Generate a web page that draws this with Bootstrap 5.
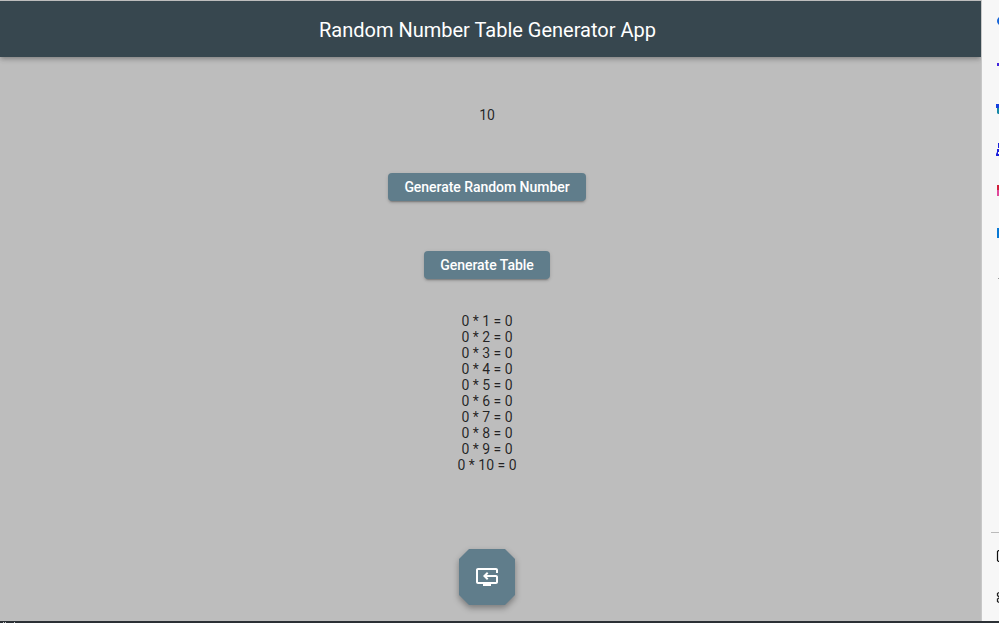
<!DOCTYPE html>
<html lang="en">
<head>
<meta charset="utf-8">
<meta name="viewport" content="width=device-width, initial-scale=1">
<title>Random Number Table Generator App</title>
<link href="https://cdn.jsdelivr.net/npm/bootstrap@5.3.0/dist/css/bootstrap.min.css" rel="stylesheet">
<style>
body { font-family: Roboto, sans-serif; font-size: 14px; line-height: 16px; color: rgba(0,0,0,.82); background: #bdbdbd; }
.app-bar { height: 56px; margin-top: 1px; padding: 2px 6px 0 0; background: #37474f; color: #fff; box-shadow: 0 2px 4px -1px rgba(0,0,0,.2), 0 3px 5px rgba(0,0,0,.12), 0 1px 8px rgba(0,0,0,.06); clip-path: inset(0 0 -16px 0); }
.app-bar h1 { font-size: 20px; font-weight: 400; line-height: 24px; }
.app-content { padding: 50px 7px 0 0; }
.app-btn { --bs-btn-color: #fff; --bs-btn-bg: #607d8b; --bs-btn-hover-color: #fff; --bs-btn-hover-bg: #6d8996; --bs-btn-border-width: 0; --bs-btn-border-radius: 4px; --bs-btn-font-size: 14px; --bs-btn-font-weight: 500; --bs-btn-line-height: 16px; --bs-btn-padding-x: 0; --bs-btn-padding-y: 6px; height: 28px; letter-spacing: -.04px; box-shadow: 0 3px 1px -2px rgba(0,0,0,.18), 0 2px 2px rgba(0,0,0,.11), 0 1px 4px rgba(0,0,0,.1); }
.btn-random { width: 198px; margin-top: 50px; }
.btn-table { width: 126px; margin-top: 50px; }
.times-table { margin-top: 34px; }
.fab { width: 56px; height: 56px; margin-top: 76px; filter: drop-shadow(0 3px 3px rgba(0,0,0,.35)); }
.fab-face { background: #607d8b; clip-path: polygon(10px 0, 46px 0, 56px 10px, 56px 46px, 46px 56px, 10px 56px, 0 46px, 0 10px); }
.side-rail { width: 17px; background: #f7f7f7; }
.app-edge { width: 1px; background: #c8c8c8; }
.rail-art { display: block; }
.taskbar { height: 2px; background: #2b3035; }
</style>
<script src="https://cdn.jsdelivr.net/npm/bootstrap@5.3.0/dist/js/bootstrap.bundle.min.js" defer></script>
</head>
<body>
<div class="d-flex flex-column vh-100 overflow-hidden">
  <div class="d-flex flex-grow-1">
    <main class="d-flex flex-column flex-grow-1">
      <header class="app-bar d-flex align-items-center justify-content-center flex-shrink-0">
        <h1 class="m-0">Random Number Table Generator App</h1>
      </header>
      <section class="app-content d-flex flex-column align-items-center">
        <div>10</div>
        <button type="button" class="btn app-btn btn-random">Generate Random Number</button>
        <button type="button" class="btn app-btn btn-table">Generate Table</button>
        <div class="times-table text-center">
          <div>0 * 1 = 0</div>
          <div>0 * 2 = 0</div>
          <div>0 * 3 = 0</div>
          <div>0 * 4 = 0</div>
          <div>0 * 5 = 0</div>
          <div>0 * 6 = 0</div>
          <div>0 * 7 = 0</div>
          <div>0 * 8 = 0</div>
          <div>0 * 9 = 0</div>
          <div>0 * 10 = 0</div>
        </div>
        <button type="button" class="fab border-0 p-0 bg-transparent" aria-label="Reset">
          <span class="fab-face d-flex align-items-center justify-content-center w-100 h-100">
            <svg width="24" height="24" viewBox="0 0 24 24" fill="#fff"><path d="M21 8h2V5c0-1.1-.9-2-2-2H3c-1.1 0-2 .9-2 2v12c0 1.1.9 2 2 2h5v2h8v-2h5c1.1 0 2-.9 2-2v-5c0-1.1-.9-2-2-2h-9.17l1.58-1.59L12 7l-4 4 4 4 1.41-1.41L11.83 12H21v5H3V5h18z"/></svg>
          </span>
        </button>
      </section>
    </main>
    <div class="app-edge"></div>
    <aside class="side-rail">
      <svg class="rail-art" width="17" height="621" viewBox="0 0 17 621">
        <circle cx="19.500" cy="21" r="4.500" fill="#1463d8"/>
        <path d="M15 63h2v3h-2z" fill="#4324dc"/>
        <path d="M14 104h3v4h-3z" fill="#1640df"/><path d="M15 108h2v6h-1l-1-1z" fill="#1689a8"/>
        <path d="M16 143h1v5h-1zM15 149h2v3h-1v2h1v2h-3v-2l1-2z" fill="#1c20dc"/>
        <path d="M15 185h2v5h-2z" fill="#d11e3a"/><path d="M15 190h2v6h-2z" fill="#e0489c"/>
        <path d="M15 228h2v10h-2z" fill="#0878d4"/>
        <path d="M16 278h1v1h-1z" fill="#999"/>
        <path d="M9 532h8v1H9z" fill="#bababa"/>
        <path d="M17 550.5h-.5l-1 1v9l1 1h.5" fill="none" stroke="#111" stroke-width="1.2"/>
        <path d="M17 592.5l-1.5 1v2l1.5 1.5m0 1l-1.5 1v2.500l1.500 1" fill="none" stroke="#222" stroke-width="1.3"/>
      </svg>
    </aside>
  </div>
  <footer class="taskbar flex-shrink-0">
    <svg class="rail-art" width="20" height="2"><path d="M3 1h1v1H3zM5 1h1v1H5zM14 1h1v1h-1z" fill="#c5c8ca"/></svg>
  </footer>
</div>
</body>
</html>
